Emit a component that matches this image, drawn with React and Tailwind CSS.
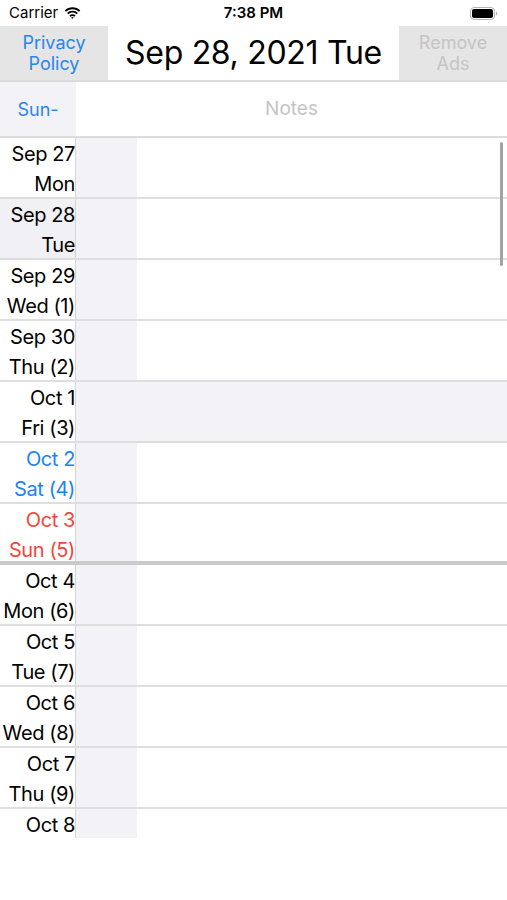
const rows = [
  { d: 'Sep 27', w: 'Mon' },
  { d: 'Sep 28', w: 'Tue', selected: true },
  { d: 'Sep 29', w: 'Wed (1)' },
  { d: 'Sep 30', w: 'Thu (2)' },
  { d: 'Oct 1', w: 'Fri (3)', today: true },
  { d: 'Oct 2', w: 'Sat (4)', color: 'text-[#1a84f5]' },
  { d: 'Oct 3', w: 'Sun (5)', color: 'text-[#f5453b]', weekEnd: true },
  { d: 'Oct 4', w: 'Mon (6)' },
  { d: 'Oct 5', w: 'Tue (7)' },
  { d: 'Oct 6', w: 'Wed (8)' },
  { d: 'Oct 7', w: 'Thu (9)' },
  { d: 'Oct 8', w: 'Fri (10)' },
];

const WifiIcon = () => (
  <svg width="17" height="12" viewBox="0 0 17 12" className="ml-[6px]">
    <path d="M8.5 2.2c2.5 0 4.8 1 6.5 2.6l1.3-1.3C14.2 1.5 11.5.3 8.5.3S2.8 1.5.7 3.5L2 4.8c1.7-1.6 4-2.6 6.5-2.6z" fill="#000" />
    <path d="M8.5 5.6c1.6 0 3 .6 4.1 1.6l1.3-1.3C12.5 4.6 10.6 3.8 8.5 3.8S4.5 4.6 3.1 5.9l1.3 1.3c1.1-1 2.5-1.6 4.1-1.6z" fill="#000" />
    <path d="M8.5 9c.7 0 1.3.3 1.8.7l1.3-1.3C10.8 7.6 9.7 7.2 8.5 7.2s-2.3.4-3.1 1.2l1.3 1.3c.5-.4 1.1-.7 1.8-.7zM8.5 11.7l1.3-1.3c-.3-.3-.8-.5-1.3-.5s-1 .2-1.3.5z" fill="#000" />
  </svg>
);

const BatteryIcon = () => (
  <svg width="28" height="13" viewBox="0 0 28 13">
    <rect x="0.5" y="0.5" width="24" height="12" rx="3.5" fill="none" stroke="#b5b5b5" />
    <rect x="2" y="2" width="21" height="9" rx="2" fill="#000" />
    <path d="M26 4.5v4c.8-.3 1.3-1.1 1.3-2s-.5-1.7-1.3-2z" fill="#b5b5b5" />
  </svg>
);

const App = () => {
  return (
    <div className="w-[507px] h-[900px] bg-white overflow-hidden font-['Inter','Roboto',sans-serif] text-black">
      {/* status bar */}
      <div className="h-[26px] flex items-center justify-between px-[9px] text-[15px]">
        <div className="flex items-center w-[100px]">
          <span className="font-normal">Carrier</span>
          <WifiIcon />
        </div>
        <span className="font-semibold">7:38 PM</span>
        <div className="w-[100px] flex justify-end">
          <BatteryIcon />
        </div>
      </div>

      {/* header */}
      <div className="h-[56px] flex border-b-2 border-[#dcdcdc]">
        <button className="w-[108px] bg-[#e5e5e5] text-[#2a86ee] text-[18px] leading-[21px]">
          Privacy
          <br />
          Policy
        </button>
        <div className="flex-1 flex items-center justify-center text-[32px] tracking-[-0.3px]">
          Sep 28, 2021 Tue
        </div>
        <button className="w-[108px] bg-[#e5e5e5] text-[#c4c4c4] text-[18px] leading-[21px]">
          Remove
          <br />
          Ads
        </button>
      </div>

      {/* column header */}
      <div className="h-[56px] flex border-b-2 border-[#dcdcdc]">
        <div className="w-[76px] bg-[#f2f2f7] flex items-center justify-center text-[18px] text-[#2a86ee]">
          Sun-
        </div>
        <div className="flex-1 flex items-center justify-center text-[19px] text-[#c4c4c4]">
          Notes
        </div>
      </div>

      {/* list */}
      <div className="relative h-[700px] overflow-hidden">
        {rows.map((r) => (
          <div
            key={r.d}
            className={
              r.weekEnd
                ? 'h-[61px] flex border-b-4 border-[#cacaca]'
                : 'h-[61px] flex border-b-2 border-[#dedede]'
            }
          >
            <div
              className={
                'w-[76px] shrink-0 border-r border-[#d4d4d4] pt-px flex flex-col items-end whitespace-nowrap text-[20px] leading-[30px] tracking-[-0.4px] ' +
                (r.selected ? 'bg-[#f0f0f5] ' : 'bg-white ') +
                (r.color || 'text-black')
              }
            >
              <div>{r.d}</div>
              <div>{r.w}</div>
            </div>
            <div className="w-[61px] shrink-0 bg-[#f2f2f7]" />
            <div className={r.today ? 'flex-1 bg-[#f2f2f7]' : 'flex-1 bg-white'} />
          </div>
        ))}
        <div className="absolute right-[4px] top-[4px] w-[3px] h-[124px] rounded-full bg-[#a3a3a3]" />
      </div>
    </div>
  );
};

export default App;
